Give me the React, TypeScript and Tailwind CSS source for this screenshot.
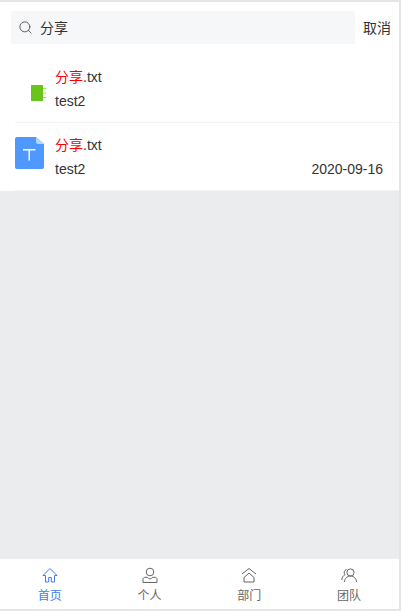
import { Search } from 'lucide-react'

const font = { fontFamily: '"Liberation Sans", "Noto Sans CJK SC", sans-serif' }

function Title() {
  return (
    <div className="text-sm leading-5 text-[#333]">
      <span className="text-[#ff0000]">分享</span>.txt
    </div>
  )
}

function NoteIcon() {
  return (
    <svg width="17" height="18" viewBox="0 0 17 18">
      <rect x="1" y="1" width="12" height="16" rx="0.5" fill="#67c619" />
      <path d="M13 4.500h3.500M13 9h3.500M13 13.500h3.500" stroke="#a5e06e" strokeWidth="1.200" />
    </svg>
  )
}

function TextFileIcon() {
  return (
    <svg width="29" height="32" viewBox="0 0 29 32">
      <path d="M2 0h19l8 7v23a2 2 0 0 1-2 2H2a2 2 0 0 1-2-2V2a2 2 0 0 1 2-2z" fill="#4f98ff" />
      <path d="M21 0l8 7h-6a2 2 0 0 1-2-2z" fill="#b5d5fd" />
      <path d="M8 12.800h12.500M14.250 12.800v10.700" stroke="#fff" strokeWidth="1.500" fill="none" />
    </svg>
  )
}

const tabs = [
  {
    label: '首页',
    active: true,
    icon: <path d="M8 1.500 1 8.500h2.500v6.500h3.200v-4.500h2.600V15h3.200V8.500H15z" strokeLinejoin="round" />,
  },
  {
    label: '个人',
    active: false,
    icon: (
      <>
        <circle cx="8" cy="5" r="3.800" />
        <path d="M1 15.500v-3.200c0-1.200 1-2 2-2h2.400c.6 1 1.600 1.500 2.600 1.500s2-.5 2.600-1.500H13c1 0 2 .8 2 2v3.200z" strokeLinejoin="round" />
      </>
    ),
  },
  {
    label: '部门',
    active: false,
    icon: (
      <>
        <path d="M1 7 8 1.500 15 7" strokeLinejoin="round" />
        <path d="M8 6 3 10.500v4.500h10v-4.500z" strokeLinejoin="round" />
      </>
    ),
  },
  {
    label: '团队',
    active: false,
    icon: (
      <>
        <circle cx="9.500" cy="5.500" r="3.600" />
        <path d="M3.500 15c0-3.300 2.600-6 6-6s6 2.700 6 6" />
        <path d="M5.500 2.500a3.200 3.200 0 0 0-1.500 5.200C2 8.700.8 10.800.8 13" />
      </>
    ),
  },
]

export default function App() {
  return (
    <div
      className="flex h-[611px] w-[401px] flex-col border-y-2 border-r-2 border-[#e5e5e5] bg-[#ebecee]"
      style={font}
    >
      <div className="bg-white">
        <div className="flex items-center pl-[11px] pt-[9px]">
          <div className="flex h-[33px] w-[344px] items-center gap-[7px] rounded-[2px] bg-[#f6f7f9] pl-[7px] text-sm text-[#333]">
            <Search size={15} strokeWidth={1.5} className="text-[#555]" />
            分享
          </div>
          <span className="ml-2 text-sm text-[#333]">取消</span>
        </div>
        <div className="ml-[15px] flex h-[79px] items-center border-b border-[#f3f3f3] pr-4">
          <div className="flex w-10 justify-start pl-[15px] pt-5">
            <NoteIcon />
          </div>
          <div className="flex flex-col gap-1 pt-3">
            <Title />
            <div className="text-sm leading-5 text-[#333]">test2</div>
          </div>
        </div>
        <div className="ml-[15px] flex h-[68px] items-center border-b border-[#f3f3f3] pr-4">
          <div className="w-10 self-start pt-[14px]">
            <TextFileIcon />
          </div>
          <div className="flex flex-1 flex-col gap-1 pt-px">
            <Title />
            <div className="flex justify-between text-sm leading-5 text-[#333]">
              <span>test2</span>
              <span>2020-09-16</span>
            </div>
          </div>
        </div>
      </div>
      <div className="flex-1" />
      <div className="flex h-[50px] bg-white">
        {tabs.map((tab) => (
          <div
            key={tab.label}
            className={`flex flex-1 flex-col items-center pt-2 text-xs leading-4 ${tab.active ? 'text-[#3f7cf6]' : 'text-[#666]'}`}
          >
            <svg
              width="16"
              height="16"
              viewBox="0 0 16 16"
              fill="none"
              stroke="currentColor"
              strokeWidth="1"
            >
              {tab.icon}
            </svg>
            <span className="mt-[5px]">{tab.label}</span>
          </div>
        ))}
      </div>
    </div>
  )
}
